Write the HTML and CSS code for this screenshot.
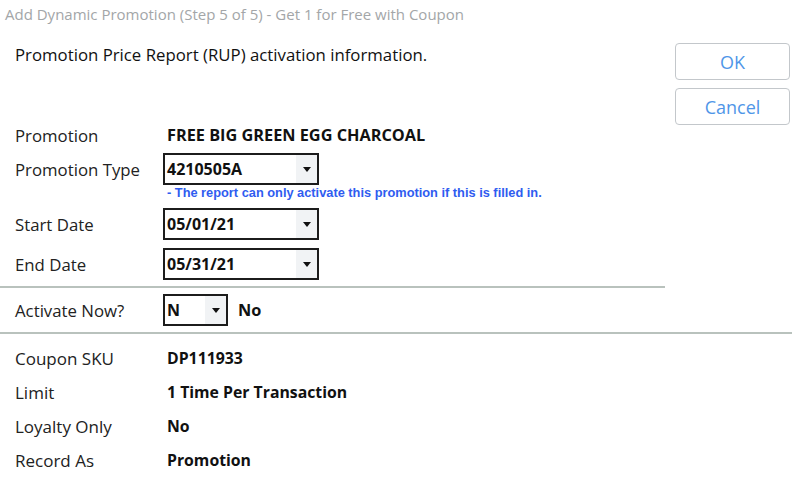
FILE: index.html
```html
<!DOCTYPE html>
<html lang="en">
<head>
    <meta charset="UTF-8">
    <title>Add Dynamic Promotion</title>
    <link rel="stylesheet" href="styles.css">
</head>
<body>
    <div class="title">Add Dynamic Promotion (Step 5 of 5) - Get 1 for Free with Coupon</div>

    <div class="top">
        <div class="main">
            <p class="intro">Promotion Price Report (RUP) activation information.</p>

            <div class="form">
                <div class="row row-promo">
                    <span class="label">Promotion</span>
                    <span class="value">FREE BIG GREEN EGG CHARCOAL</span>
                </div>
                <div class="row">
                    <span class="label">Promotion Type</span>
                    <div class="combo"><span class="combo-text">4210505A</span><span class="combo-btn"><i class="caret"></i></span></div>
                </div>
                <div class="note">- The report can only activate this promotion if this is filled in.</div>
                <div class="row row-start">
                    <span class="label">Start Date</span>
                    <div class="combo"><span class="combo-text">05/01/21</span><span class="combo-btn"><i class="caret"></i></span></div>
                </div>
                <div class="row row-end">
                    <span class="label">End Date</span>
                    <div class="combo"><span class="combo-text">05/31/21</span><span class="combo-btn"><i class="caret"></i></span></div>
                </div>
            </div>

            <hr class="sep sep-short">

            <div class="row">
                <span class="label">Activate Now?</span>
                <div class="combo combo-small"><span class="combo-text">N</span><span class="combo-btn"><i class="caret"></i></span></div>
                <span class="value value-after">No</span>
            </div>
        </div>

        <div class="actions">
            <button class="btn">OK</button>
            <button class="btn">Cancel</button>
        </div>
    </div>

    <hr class="sep sep-long">

    <div class="details">
        <div class="drow"><span class="label">Coupon SKU</span><span class="value">DP111933</span></div>
        <div class="drow"><span class="label">Limit</span><span class="value">1 Time Per Transaction</span></div>
        <div class="drow"><span class="label">Loyalty Only</span><span class="value">No</span></div>
        <div class="drow"><span class="label">Record As</span><span class="value">Promotion</span></div>
    </div>
</body>
</html>
```

FILE: styles.css
```css
body {
    font-family: 'Open Sans', 'Noto Sans', sans-serif;
    margin: 0;
    padding: 0;
    background: #fff;
    color: #1e1e1e;
    width: 800px;
    height: 486px;
    overflow: hidden;
}

.title {
    height: 28px;
    line-height: 28px;
    padding-left: 5px;
    font-size: 15px;
    color: #a3a6a8;
}

.top {
    display: flex;
}

.main {
    width: 665px;
}

.intro {
    margin: 16px 0 0 15px;
    font-size: 16.8px;
    line-height: 22px;
    color: #111;
}

.form {
    margin-top: 53px;
}

.row {
    display: flex;
    align-items: center;
    height: 32px;
    padding-left: 15px;
}

.row-promo {
    margin-bottom: 2px;
}

.row-start {
    margin-top: 7px;
}

.row-end {
    margin-top: 8px;
}

.label {
    width: 148px;
    flex: none;
    font-size: 16.8px;
    color: #222;
}

.value {
    font-size: 16.3px;
    font-weight: 700;
    color: #111;
    padding-left: 4px;
}

.value-after {
    padding-left: 10px;
}

/* combo box */
.combo {
    box-sizing: border-box;
    width: 156px;
    height: 32px;
    border: 2px solid #1c1c1c;
    display: flex;
    align-items: stretch;
    background: #fff;
}

.combo-small {
    width: 65px;
}

.combo-text {
    flex: 1;
    padding-left: 2px;
    font-size: 16px;
    font-weight: 700;
    line-height: 28px;
    color: #111;
}

.combo-btn {
    width: 21px;
    background: #f1f3f5;
    display: flex;
    align-items: center;
    justify-content: center;
}

.caret {
    width: 0;
    height: 0;
    border-left: 4px solid transparent;
    border-right: 4px solid transparent;
    border-top: 5px solid #111;
}

.note {
    height: 16px;
    line-height: 16px;
    padding-left: 167px;
    font-family: 'Liberation Sans', Arial, sans-serif;
    font-size: 12.8px;
    font-weight: 700;
    color: #2f5cf0;
}

.sep {
    border: none;
    border-top: 2px solid #b9c2bd;
    margin: 0;
}

.sep-short {
    margin: 6px 0 6px;
}

.sep-long {
    width: 792px;
    margin: 6px 0 7px;
}

.actions {
    display: flex;
    flex-direction: column;
    gap: 8px;
    margin: 15px 0 0 10px;
}

.btn {
    width: 115px;
    height: 37px;
    border: 1px solid #c3c7cb;
    border-radius: 4px;
    background: #fff;
    font-family: 'Open Sans', 'Noto Sans', sans-serif;
    font-size: 18px;
    color: #4f96e8;
}

.details .drow {
    display: flex;
    align-items: center;
    height: 34px;
    padding-left: 15px;
}

.details .label {
    font-size: 17px;
}

.details .value {
    font-size: 15.8px;
}
```
